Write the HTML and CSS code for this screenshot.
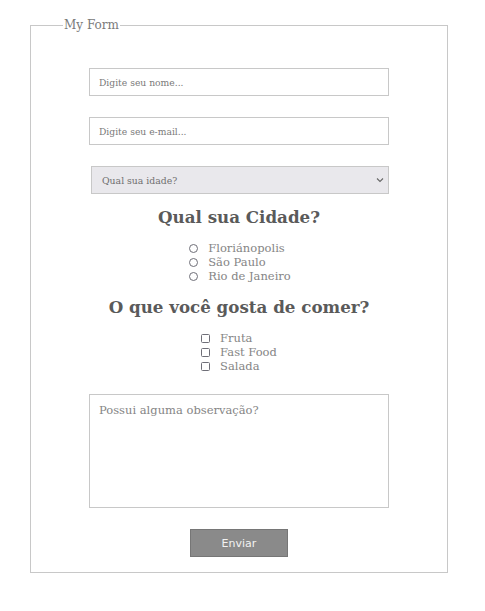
FILE: index.html
```html
<!DOCTYPE html>
<html lang="pt">
<head>
<meta charset="utf-8">
<link rel="stylesheet" href="styles.css">
</head>
<body>
<form class="form">
  <fieldset class="box">
    <legend class="legend">My Form</legend>
    <input class="field" type="text" placeholder="Digite seu nome...">
    <input class="field field-email" type="email" placeholder="Digite seu e-mail...">
    <div class="select">
      <span>Qual sua idade?</span>
      <svg class="chev" width="8" height="6" viewBox="0 0 8 6"><path d="M1 1.5 L4 4.5 L7 1.5" fill="none" stroke="#666" stroke-width="1.1"/></svg>
    </div>
    <h2 class="title t1">Qual sua Cidade?</h2>
    <div class="options">
      <label class="opt"><span class="radio"></span>Floriánopolis</label>
      <label class="opt"><span class="radio"></span>São Paulo</label>
      <label class="opt"><span class="radio"></span>Rio de Janeiro</label>
    </div>
    <h2 class="title t2">O que você gosta de comer?</h2>
    <div class="options checks">
      <label class="opt"><span class="check"></span>Fruta</label>
      <label class="opt"><span class="check"></span>Fast Food</label>
      <label class="opt"><span class="check"></span>Salada</label>
    </div>
    <textarea class="area" placeholder="Possui alguma observação?"></textarea>
    <button class="btn" type="button">Enviar</button>
  </fieldset>
</form>
</body>
</html>
```
FILE: styles.css
```css
html, body { margin: 0; padding: 0; background: #fff; }
body { font-family: "DejaVu Serif", serif; }
.form { padding: 19px 38px 0 30px; }
.box {
  margin: 0;
  border: 1px solid #c8c8c8;
  padding: 37px 0 15px 0;
  display: flex;
  flex-direction: column;
  align-items: center;
  box-sizing: border-box;
  width: 418px;
  min-width: 0;
}
.legend {
  margin-left: 32px;
  padding: 0 1px;
  font-size: 12px;
  color: #7a7a7a;
  line-height: 12px;
}
.field {
  width: 300px;
  height: 28px;
  box-sizing: border-box;
  border: 1px solid #c8c8c8;
  padding: 0 9px;
  font-family: "DejaVu Serif", serif;
  font-size: 9.2px;
  color: #777;
  margin: 0;
  outline: none;
}
.field::placeholder { color: #7a7a7a; }
.field-email { margin-top: 21px; }
.select {
  margin-top: 21px;
  width: 298px;
  margin-left: 2px;
  height: 28px;
  box-sizing: border-box;
  border: 1px solid #c8c8c8;
  background: #e9e8ec;
  display: flex;
  align-items: center;
  justify-content: space-between;
  padding: 0 4px 0 10px;
  font-size: 9.3px;
  color: #6f6f6f;
}
.title {
  margin: 0;
  font-weight: bold;
  color: #5a5a5a;
  font-size: 16.7px;
  line-height: 24px;
}
.t1 { margin-top: 11px; }
.t2 { margin-top: 12px; }
.options {
  margin-top: 12px;
  display: flex;
  flex-direction: column;
  align-items: flex-start;
  padding-left: 2px;
}
.options.checks { padding-left: 0; margin-top: 12px; }
.opt {
  display: flex;
  align-items: center;
  font-size: 11.5px;
  line-height: 14px;
  color: #858585;
}
.radio {
  width: 7px; height: 7px;
  border: 1px solid #6f6f78;
  border-radius: 50%;
  margin-right: 10px;
}
.check {
  width: 7px; height: 7px;
  border: 1px solid #6f6f78;
  border-radius: 1.5px;
  margin-right: 10px;
}
.area {
  margin-top: 21px;
  width: 300px;
  height: 114px;
  box-sizing: border-box;
  border: 1px solid #c8c8c8;
  padding: 8px 9px;
  font-family: "DejaVu Serif", serif;
  font-size: 11.5px;
  resize: none;
  outline: none;
}
.area::placeholder { color: #858585; }
.btn {
  margin-top: 21px;
  width: 98px;
  height: 28px;
  background: #8a8a8a;
  border: 1px solid #767676;
  color: #f2f2f2;
  font-family: "DejaVu Sans", sans-serif;
  font-size: 11px;
  padding: 0;
}
```
